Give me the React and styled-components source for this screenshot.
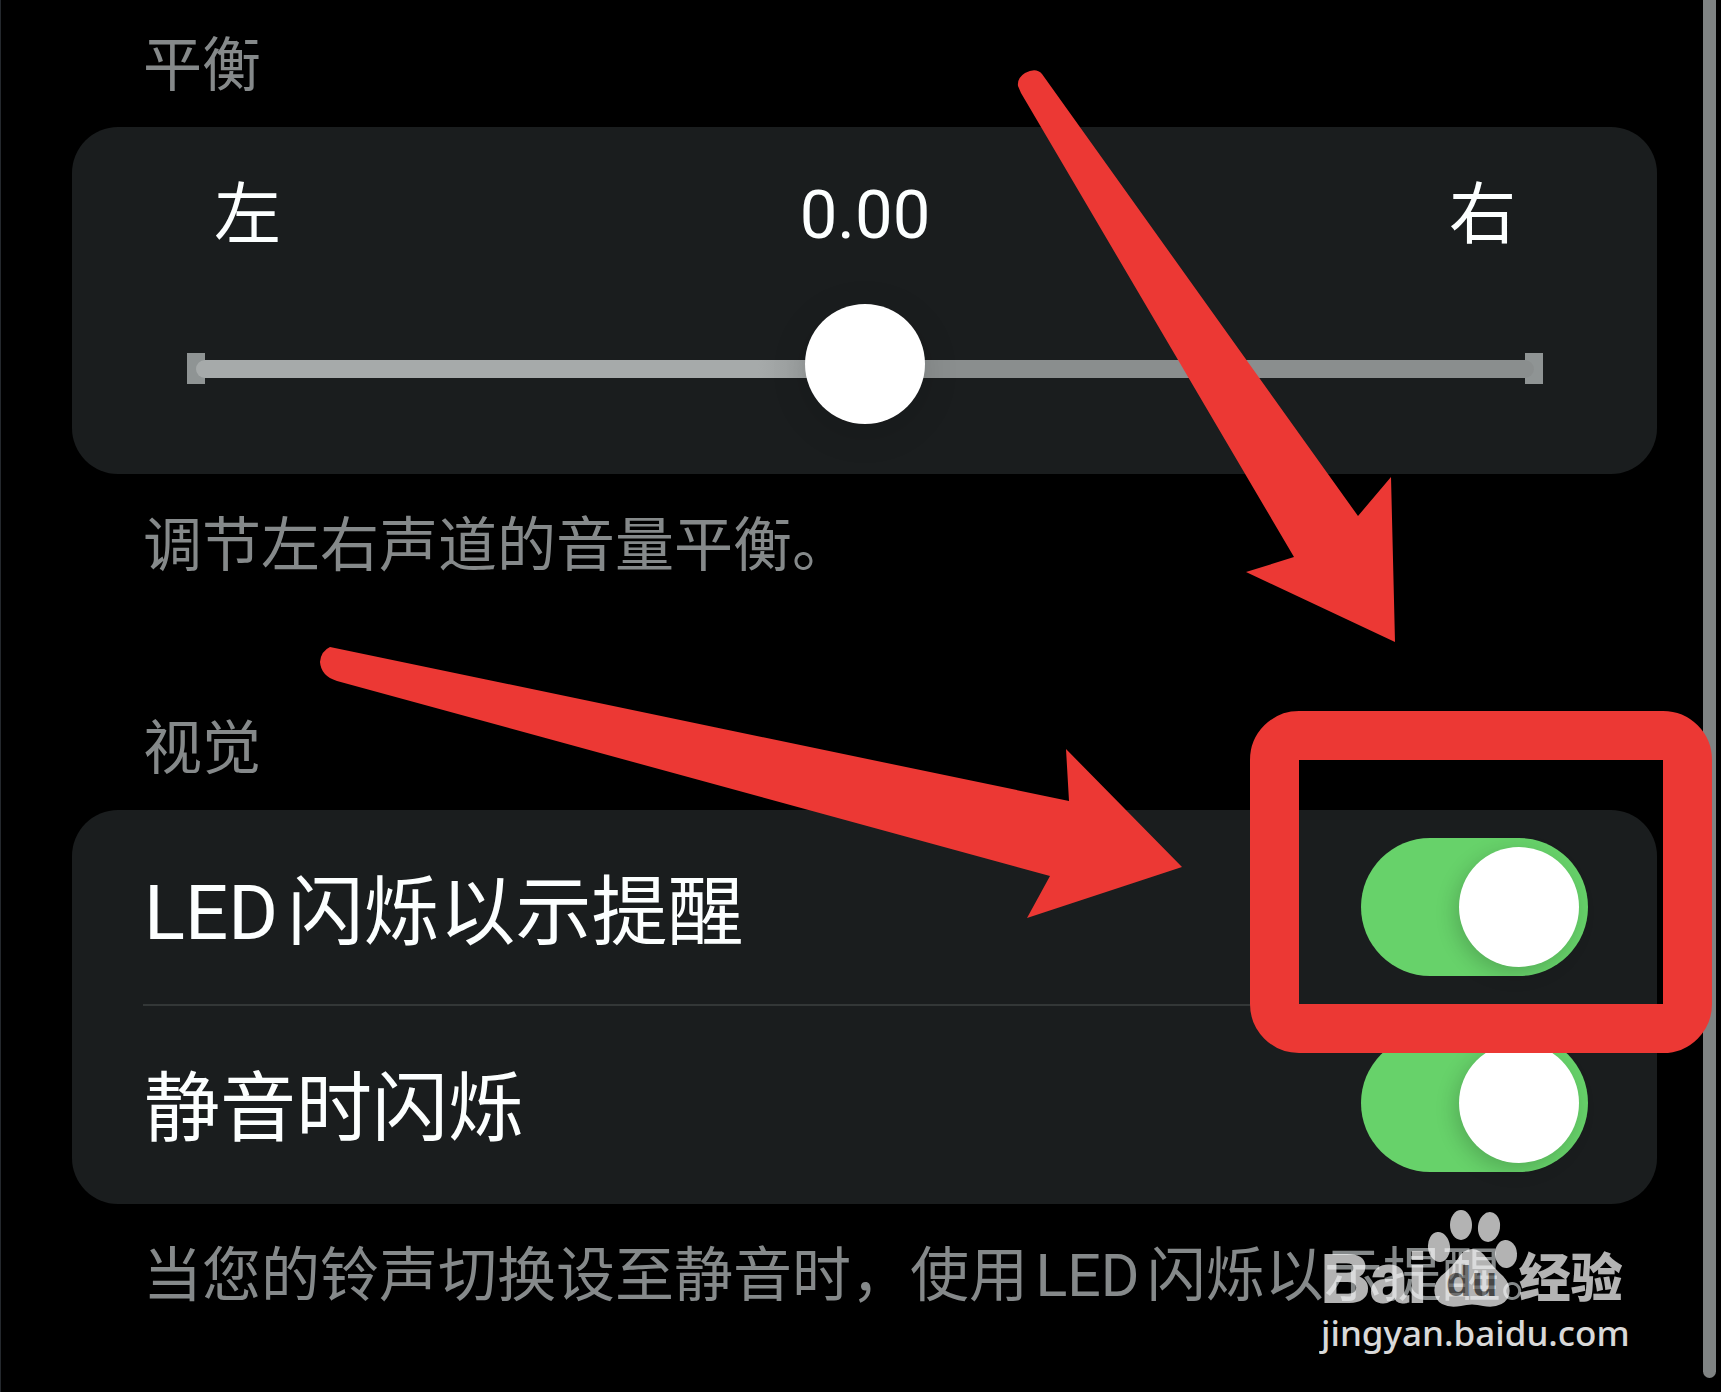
import React, { useState } from "react";
import styled, { createGlobalStyle } from "styled-components";

const GlobalStyle = createGlobalStyle`
    *{
        box-sizing:border-box;
    }
    body{
        margin:0;
        background:#000000;
        font-family:Roboto, "Noto Sans CJK SC", sans-serif;
        text-autospace:normal;
    }
`;
const Page = styled.main`
    position:relative;
    display:flex;
    flex-direction:column;
    gap:94px;
    min-height:100vh;
    padding:0 64px 0 71px;
    border-left:1px solid #24282d;
    overflow:hidden;
    background:#000000;
`;
const Section = styled.section`
    display:flex;
    flex-direction:column;
`;
const SectionTitle = styled.h2`
    margin:0;
    padding:22px 71px 18px;
    font-weight:400;
    font-size:59px;
    line-height:87px;
    color:#85898a;
`;
const SectionNote = styled.p`
    margin:0;
    padding:28px 71px 0;
    font-size:59px;
    line-height:87px;
    white-space:nowrap;
    color:#85898a;
`;
const Card = styled.div`
    border-radius:46px;
    background:#1a1d1e;
`;
const BalanceCard = styled(Card)`
    padding:38px 114px 50px 115px;
`;
const BalanceLabels = styled.div`
    display:flex;
    justify-content:space-between;
    padding:0 27px;
    font-size:67px;
    line-height:100px;
    color:#fcffff;
`;
const Slider = styled.input`
    -webkit-appearance:none;
    appearance:none;
    display:block;
    width:100%;
    height:120px;
    margin:39px 0 0;
    background:
        linear-gradient(#8f9494, #8f9494) left 49px / 18px 31px no-repeat,
        linear-gradient(#8f9494, #8f9494) right 49px / 18px 31px no-repeat;
    background-position:left 49px, right 49px;
    &::-webkit-slider-runnable-track{
        height:18px;
        margin:10px 9px 0;
        border-radius:9px;
        background:linear-gradient(90deg, #a6aaaa 0 42%, #8a8e8e 50%);
    }
    &::-webkit-slider-thumb{
        -webkit-appearance:none;
        width:120px;
        height:120px;
        margin-top:-56px;
        border-radius:50%;
        background:#ffffff;
        box-shadow:0 8px 36px #00000020;
    }
`;
const SwitchCard = styled(Card)`
    padding-bottom:4px;
`;
const Row = styled.div`
    display:flex;
    align-items:center;
    justify-content:space-between;
    height:194px;
    padding:0 69px 0 72px;
    color:#fcffff;
`;
const RowLabel = styled.label`
    padding-top:12px;
    font-size:76px;
    line-height:112px;
`;
const Divider = styled.hr`
    width:auto;
    height:2px;
    margin:0 0 0 71px;
    border:0;
    background:#333737;
`;
const SwitchBox = styled.span`
    position:relative;
    display:flex;
`;
const Switch = styled.input`
    -webkit-appearance:none;
    appearance:none;
    display:flex;
    align-items:center;
    width:227px;
    height:138px;
    margin:0;
    padding:0 9px;
    border-radius:69px;
    background:#39393d;
    &::before{
        content:"";
        width:120px;
        height:120px;
        border-radius:50%;
        background:#ffffff;
        box-shadow:-4px 6px 20px #0000002e;
    }
    &:checked{
        justify-content:flex-end;
        background:#67d26a;
    }
`;
const Highlight = styled.span`
    position:absolute;
    z-index:2;
    inset:-127px -124px -77px -111px;
    border:49px solid #ec3834;
    border-radius:49px;
    pointer-events:none;
`;
const Arrows = styled.svg`
    position:absolute;
    z-index:2;
    top:0;
    left:-1px;
    width:1721px;
    height:1392px;
    fill:#ec3834;
    pointer-events:none;
`;
const ScrollThumb = styled.div`
    position:absolute;
    top:0;
    right:5px;
    bottom:14px;
    width:13px;
    border-radius:0 0 7px 7px;
    background:#7f8383;
`;
const Watermark = styled.a`
    position:absolute;
    right:92px;
    bottom:34px;
    width:308px;
    color:#ffffff;
    text-decoration:none;
`;
const Brand = styled.span`
    display:flex;
    align-items:flex-end;
    height:100px;
    font-family:"Liberation Sans", "Noto Sans CJK SC", sans-serif;
    font-weight:700;
    opacity:0.7;
`;
const BrandLatin = styled.span`
    font-size:68px;
    line-height:60px;
    -webkit-text-stroke:2px currentColor;
`;
const BrandHan = styled.span`
    font-size:52px;
    line-height:58px;
    font-weight:900;
`;
const Paw = styled.svg`
    width:92px;
    height:98px;
    fill:currentColor;
    text{
        font-size:42px;
        fill:#000000;
        opacity:0.6;
    }
`;
const SiteName = styled.span`
    display:block;
    font-family:"Noto Sans", sans-serif;
    font-weight:500;
    font-size:35px;
    line-height:50px;
    opacity:0.85;
`;

const Toggle = ({ id, highlighted }) => {
    const [on, setOn] = useState(true);
    return (
        <SwitchBox>
            <Switch id={id} type="checkbox" role="switch" checked={on} onChange={() => setOn(!on)} />
            {highlighted && <Highlight />}
        </SwitchBox>
    );
}

const App = () => {
    const [balance, setBalance] = useState(0);
    return (
        <Page>
            <GlobalStyle />
            <Section>
                <SectionTitle>平衡</SectionTitle>
                <BalanceCard>
                    <BalanceLabels>
                        <span>左</span>
                        <output htmlFor="balance">{balance.toFixed(2)}</output>
                        <span>右</span>
                    </BalanceLabels>
                    <Slider
                        id="balance"
                        type="range"
                        aria-label="平衡"
                        min="-1"
                        max="1"
                        step="0.01"
                        value={balance}
                        onChange={(e) => setBalance(Number(e.target.value))}
                    />
                </BalanceCard>
                <SectionNote>调节左右声道的音量平衡。</SectionNote>
            </Section>
            <Section>
                <SectionTitle>视觉</SectionTitle>
                <SwitchCard>
                    <Row>
                        <RowLabel htmlFor="led">LED闪烁以示提醒</RowLabel>
                        <Toggle id="led" highlighted />
                    </Row>
                    <Divider />
                    <Row>
                        <RowLabel htmlFor="silent">静音时闪烁</RowLabel>
                        <Toggle id="silent" />
                    </Row>
                </SwitchCard>
                <SectionNote>当您的铃声切换设至静音时，使用LED闪烁以示提醒。</SectionNote>
            </Section>
            <Arrows viewBox="0 0 1721 1392" aria-hidden="true">
                <path d="M1018 86Q1017 78 1025 73Q1036 67 1042 74L1358 516L1391 477L1395 642L1246 572L1294 557L1021 93Z" />
                <path d="M330 647Q321 651 320 662Q321 676 337 681L1050 876L1027 918L1182 867L1066 749L1069 801Z" />
            </Arrows>
            <ScrollThumb />
            <Watermark href="#">
                <Brand>
                    <BrandLatin>Bai</BrandLatin>
                    <Paw viewBox="0 0 92 98">
                        <ellipse cx="34" cy="15" rx="11" ry="15" />
                        <ellipse cx="62" cy="17" rx="11" ry="15" transform="rotate(8 62 17)" />
                        <ellipse cx="12" cy="37" rx="11" ry="15" transform="rotate(-6 12 37)" />
                        <ellipse cx="79" cy="44" rx="11" ry="14" transform="rotate(-4 79 44)" />
                        <path d="M45 39Q54 39 61 50Q67 58 76 66Q86 77 81 88Q74 99 56 96Q45 93 34 96Q15 99 9 88Q4 76 14 66Q24 58 30 50Q36 39 45 39Z" />
                        <text x="19" y="86">du</text>
                    </Paw>
                    <BrandHan>经验</BrandHan>
                </Brand>
                <SiteName>jingyan.baidu.com</SiteName>
            </Watermark>
        </Page>
    );
}
export default App;
